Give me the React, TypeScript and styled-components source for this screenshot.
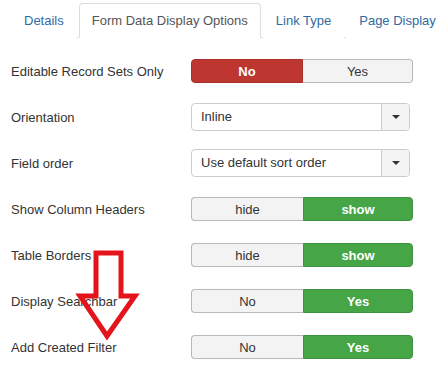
import React from "react";
import styled, { createGlobalStyle } from "styled-components";

const Global = createGlobalStyle`
  html, body {
    margin: 0;
    padding: 0;
    background: #fff;
  }
  body {
    font-family: "Liberation Sans", Arial, sans-serif;
    font-size: 13px;
    color: #333;
  }
`;

const Page = styled.div`
  position: relative;
  width: 448px;
  height: 368px;
  overflow: hidden;
  background: #fff;
`;

const Tabs = styled.ul`
  display: flex;
  list-style: none;
  margin: 3px 0 0 11px;
  padding: 0;
  border-bottom: 1px solid #ddd;
`;

const Tab = styled.li<{ $active?: boolean }>`
  box-sizing: border-box;
  height: 35px;
  margin: 0 2px -1px 0;
  padding: 0 12px;
  line-height: 33px;
  white-space: nowrap;
  border: 1px solid ${(p) => (p.$active ? "#ddd" : "transparent")};
  border-bottom-color: ${(p) => (p.$active ? "#fff" : "transparent")};
  border-radius: 4px 4px 0 0;
  background: #fff;
  color: ${(p) => (p.$active ? "#555" : "#2f6aa3")};
`;

const Form = styled.div`
  padding: 10px 0 0 11px;
`;

const Row = styled.div`
  display: flex;
  align-items: center;
  height: 46px;
`;

const Label = styled.div`
  width: 180px;
  flex: none;
  color: #333;
`;

const Toggle = styled.div`
  display: flex;
  width: 222px;
  height: 24px;
`;

const Half = styled.div<{ $on?: "red" | "green"; $side: "left" | "right"; $w: number }>`
  box-sizing: border-box;
  width: ${(p) => p.$w}px;
  display: flex;
  align-items: center;
  justify-content: center;
  font-size: 13px;
  font-weight: ${(p) => (p.$on ? "bold" : "normal")};
  color: ${(p) => (p.$on ? "#fff" : "#333")};
  background: ${(p) =>
    p.$on === "red" ? "#bd362f" : p.$on === "green" ? "#46a546" : "#f3f3f3"};
  border: 1px solid
    ${(p) =>
      p.$on === "red" ? "#a9302a" : p.$on === "green" ? "#3e913e" : "#b8b8b8"};
  border-radius: ${(p) => (p.$side === "left" ? "4px 0 0 4px" : "0 4px 4px 0")};
  ${(p) => (p.$side === "right" && !p.$on ? "border-left: none;" : "")}
  ${(p) => (p.$side === "left" && !p.$on ? "border-right: none;" : "")}
`;

const Select = styled.div`
  box-sizing: border-box;
  display: flex;
  width: 219px;
  height: 28px;
  border: 1px solid #ccc;
  border-radius: 4px;
  background: #fff;
  overflow: hidden;
`;

const SelectText = styled.div`
  flex: 1;
  padding-left: 9px;
  line-height: 26px;
  color: #333;
`;

const SelectButton = styled.div`
  width: 27px;
  border-left: 1px solid #ccc;
  background: #f4f4f4;
  display: flex;
  align-items: center;
  justify-content: center;
`;

const Caret = styled.span`
  width: 0;
  height: 0;
  border-left: 4px solid transparent;
  border-right: 4px solid transparent;
  border-top: 4px solid #333;
`;

const Arrow = styled.svg`
  position: absolute;
  left: 0;
  top: 0;
  pointer-events: none;
`;

type ToggleProps = {
  left: string;
  right: string;
  active: "left" | "right";
  color: "red" | "green";
};

function Switch({ left, right, active, color }: ToggleProps) {
  return (
    <Toggle>
      <Half $side="left" $w={112} $on={active === "left" ? color : undefined}>
        {left}
      </Half>
      <Half $side="right" $w={110} $on={active === "right" ? color : undefined}>
        {right}
      </Half>
    </Toggle>
  );
}

function Dropdown({ value }: { value: string }) {
  return (
    <Select>
      <SelectText>{value}</SelectText>
      <SelectButton>
        <Caret />
      </SelectButton>
    </Select>
  );
}

export default function App() {
  return (
    <Page>
      <Global />
      <Tabs>
        <Tab>Details</Tab>
        <Tab $active>Form Data Display Options</Tab>
        <Tab>Link Type</Tab>
        <Tab>Page Display</Tab>
      </Tabs>
      <Form>
        <Row>
          <Label>Editable Record Sets Only</Label>
          <Switch left="No" right="Yes" active="left" color="red" />
        </Row>
        <Row>
          <Label>Orientation</Label>
          <Dropdown value="Inline" />
        </Row>
        <Row>
          <Label>Field order</Label>
          <Dropdown value="Use default sort order" />
        </Row>
        <Row>
          <Label>Show Column Headers</Label>
          <Switch left="hide" right="show" active="right" color="green" />
        </Row>
        <Row>
          <Label>Table Borders</Label>
          <Switch left="hide" right="show" active="right" color="green" />
        </Row>
        <Row>
          <Label>Display Searchbar</Label>
          <Switch left="No" right="Yes" active="right" color="green" />
        </Row>
        <Row>
          <Label>Add Created Filter</Label>
          <Switch left="No" right="Yes" active="right" color="green" />
        </Row>
      </Form>
      {/* red annotation arrow drawn over the form */}
      <Arrow width="448" height="368" viewBox="0 0 448 368">
        <polygon
          points="96,253 121,253 121,296 135,296 107,336 80,296 96,296"
          fill="none"
          stroke="#e3141c"
          strokeWidth="5"
          strokeLinejoin="miter"
        />
      </Arrow>
    </Page>
  );
}
